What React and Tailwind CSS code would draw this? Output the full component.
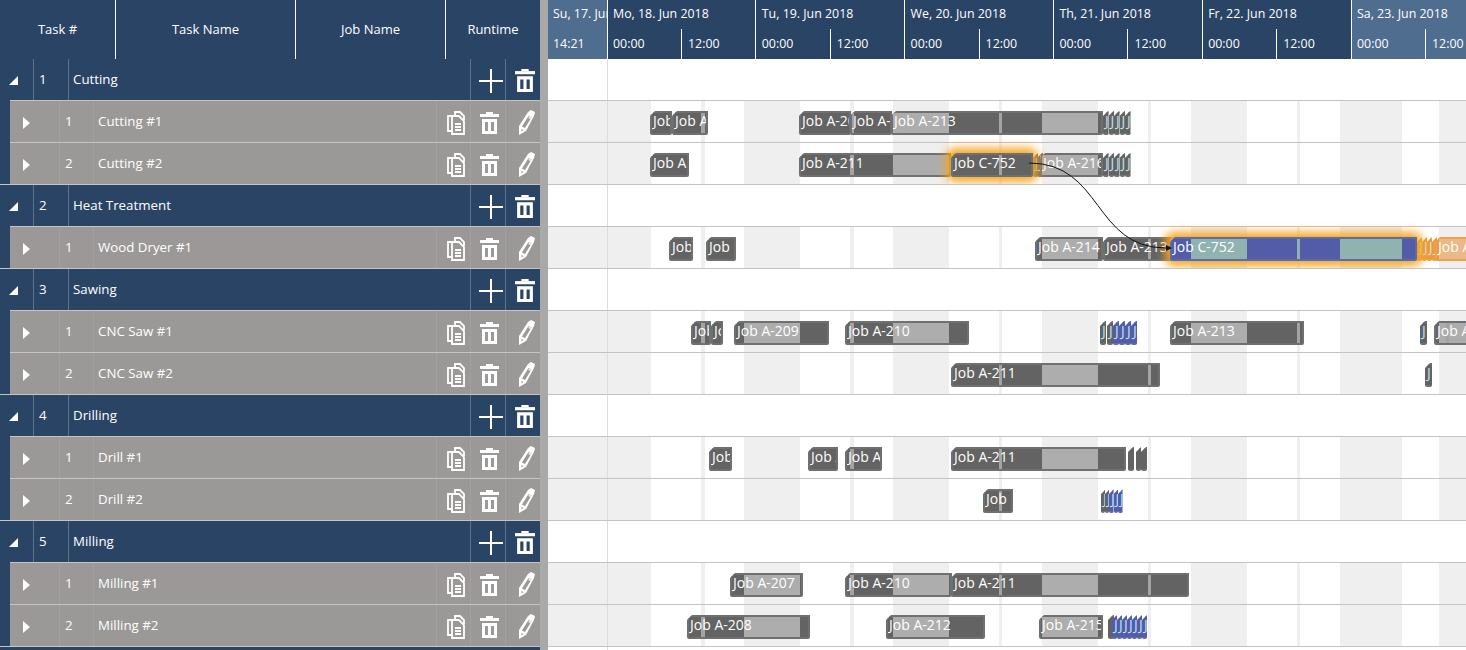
const bands = [[548, 651], [744, 800], [893, 949], [1042, 1098], [1191, 1247], [1340, 1402], [1439, 1500]]
const stripes = [[701, 705], [850, 854], [999, 1002], [1148, 1151], [1297, 1300], [1446, 1449]]
const ORIGIN = 548

const tones = {
  dark: { bg: 'bg-[#636363]', light: 'bg-[#adadad]', stripe: 'bg-[#a3a3a3]', edge: 'border-[#707070]' },
  blue: { bg: 'bg-[#525ca8]', light: 'bg-[#90b3b0]', stripe: 'bg-[#90b3b0]', edge: 'border-[#5d6ba8]' },
  orange: { bg: 'bg-[#ee9a3a]', light: 'bg-[#e9b987]', stripe: 'bg-[#e9b987]', edge: 'border-[#eea04a]' },
}

const small = (start, count, step, tone = 'dark', w = step) =>
  Array.from({ length: count }, (_, i) => ({ x: start + i * step, end: start + i * step + w, label: 'J', tone }))

const groups = [
  {
    id: 1,
    name: 'Cutting',
    items: [
      {
        name: 'Cutting #1',
        bars: [
          { x: 650, end: 672, label: 'Job A-206' },
          { x: 672, end: 708, label: 'Job A' },
          { x: 799, end: 851, label: 'Job A-207' },
          { x: 850, end: 892, label: 'Job A-208' },
          { x: 891, end: 1103, label: 'Job A-213' },
          ...small(1103, 5, 5.5),
        ],
      },
      {
        name: 'Cutting #2',
        bars: [
          { x: 650, end: 689, label: 'Job A' },
          { x: 799, end: 951, label: 'Job A-211' },
          { x: 1033, end: 1038, label: 'J' },
          { x: 1037, end: 1043, label: 'J' },
          { x: 1040, end: 1103, label: 'Job A-216' },
          ...small(1103, 5, 5.5),
          { x: 951, end: 1033, label: 'Job C-752', glow: true },
        ],
      },
    ],
  },
  {
    id: 2,
    name: 'Heat Treatment',
    items: [
      {
        name: 'Wood Dryer #1',
        bars: [
          { x: 669, end: 693, label: 'Job' },
          { x: 706, end: 736, label: 'Job' },
          { x: 1035, end: 1103, label: 'Job A-214' },
          { x: 1103, end: 1172, label: 'Job A-213' },
          ...small(1417, 4, 5, 'orange'),
          { x: 1435, end: 1480, label: 'Job A', tone: 'orange' },
          { x: 1170, end: 1417, label: 'Job C-752', tone: 'blue', glow: true },
        ],
      },
    ],
  },
  {
    id: 3,
    name: 'Sawing',
    items: [
      {
        name: 'CNC Saw #1',
        bars: [
          { x: 691, end: 711, label: 'Job A' },
          { x: 711, end: 723, label: 'Job' },
          { x: 734, end: 829, label: 'Job A-209' },
          { x: 845, end: 969, label: 'Job A-210' },
          { x: 1100, end: 1106, label: 'J' },
          { x: 1107, end: 1113, label: 'J' },
          ...small(1113, 4, 6, 'blue'),
          { x: 1170, end: 1304, label: 'Job A-213' },
          { x: 1420, end: 1427, label: 'J' },
          { x: 1434, end: 1480, label: 'Job A' },
        ],
      },
      {
        name: 'CNC Saw #2',
        bars: [
          { x: 951, end: 1160, label: 'Job A-211' },
          { x: 1425, end: 1432, label: 'J' },
        ],
      },
    ],
  },
  {
    id: 4,
    name: 'Drilling',
    items: [
      {
        name: 'Drill #1',
        bars: [
          { x: 709, end: 732, label: 'Job A' },
          { x: 808, end: 838, label: 'Job A' },
          { x: 845, end: 882, label: 'Job A-210' },
          { x: 951, end: 1126, label: 'Job A-211' },
          { x: 1128, end: 1134, label: '' },
          { x: 1136, end: 1141, label: '' },
          { x: 1141, end: 1147, label: '' },
        ],
      },
      {
        name: 'Drill #2',
        bars: [
          { x: 983, end: 1013, label: 'Job' },
          ...small(1101, 2, 4),
          ...small(1109, 3, 4.5, 'blue'),
        ],
      },
    ],
  },
  {
    id: 5,
    name: 'Milling',
    items: [
      {
        name: 'Milling #1',
        bars: [
          { x: 730, end: 803, label: 'Job A-207' },
          { x: 845, end: 952, label: 'Job A-210' },
          { x: 951, end: 1189, label: 'Job A-211' },
        ],
      },
      {
        name: 'Milling #2',
        bars: [
          { x: 687, end: 810, label: 'Job A-208' },
          { x: 886, end: 985, label: 'Job A-212' },
          { x: 1039, end: 1103, label: 'Job A-215' },
          { x: 1108, end: 1114, label: '' },
          ...small(1112, 7, 5, 'blue'),
        ],
      },
    ],
  },
]

const days = ['Mo, 18. Jun 2018', 'Tu, 19. Jun 2018', 'We, 20. Jun 2018', 'Th, 21. Jun 2018', 'Fr, 22. Jun 2018', 'Sa, 23. Jun 2018']

function PlusIcon() {
  return (
    <svg width="24" height="24" viewBox="0 0 24 24" fill="white">
      <rect x="0" y="11" width="24" height="2" />
      <rect x="11" y="0" width="2" height="24" />
    </svg>
  )
}

function TrashIcon({ size = 19 }) {
  return (
    <svg width={size} height={(size * 22) / 19} viewBox="0 0 19 22" fill="white">
      <rect x="6" y="0" width="7" height="2" />
      <rect x="0" y="2" width="19" height="3" />
      <path fillRule="evenodd" d="M2 7h15v15H2z M5 10v9h3v-9z M11 10v9h3v-9z" />
    </svg>
  )
}

function CopyIcon() {
  return (
    <svg width="18" height="24" viewBox="0 0 18 24" fill="none" stroke="white" strokeWidth="1.8">
      <path d="M5 5H1v15h4" />
      <path d="M8 5V1h5l4 4v4" />
      <path d="M5 5h7l5 5v13H5z" fill="#9b9997" />
      <path d="M8 13h6M8 16h6M8 19h6" />
    </svg>
  )
}

function PencilIcon() {
  return (
    <svg width="17" height="25" viewBox="0 0 17 25">
      <path fillRule="evenodd" fill="white" d="M10 2l3-2 4 2-1 4-8 15-7 4 0-9zM10.500 6L4 16.500l3 1.500L13.500 7.500z" />
      <path fill="white" d="M11 6.500l2.500 1.200-.8 1.500-2.500-1.300z" opacity="0.8" />
      <path fill="#9b9997" d="M3.500 19l2 1-2 1.500z" />
    </svg>
  )
}

function GroupRow({ group, first }) {
  return (
    <div className={`flex items-center bg-[#2a4466] text-white ${first ? 'h-[41px]' : 'h-[42px] border-t border-[#c5c5c2]'}`}>
      <div className="w-[33px] h-full pt-[1px] flex items-center justify-center">
        <svg width="9" height="9" viewBox="0 0 9 9" fill="white" className="ml-[-7px]">
          <path d="M9 0v9H0z" />
        </svg>
      </div>
      <div className="w-[35px] h-full border-l border-[#5c7390] pl-[5px] flex items-center">{group.id}</div>
      <div className="flex-1 h-full border-l border-[#5c7390] pl-[4px] flex items-center">{group.name}</div>
      <div className="w-[35px] h-full border-l border-[#5c7390] pl-[6px] pt-[3px] flex items-center justify-center">
        <PlusIcon />
      </div>
      <div className="w-[35px] h-full border-l border-[#5c7390] pl-[3px] pt-[2px] flex items-center justify-center">
        <TrashIcon size={20} />
      </div>
    </div>
  )
}

function ItemRow({ item, index }) {
  return (
    <div className="h-[42px] bg-[#2a4466]">
      <div className="h-full ml-[10px] flex items-center bg-[#9b9997] border-t border-[#c5c5c2] text-white">
        <div className="w-[49px] h-full pl-[13px] pt-[2px] flex items-center">
          <svg width="7" height="12" viewBox="0 0 7 12" fill="white">
            <path d="M0 0l7 6-7 6z" />
          </svg>
        </div>
        <div className="w-[34px] h-full border-l border-[#a3a19e] pl-[5px] flex items-center">{index}</div>
        <div className="flex-1 h-full border-l border-[#a3a19e] pl-[4px] flex items-center">{item.name}</div>
        <div className="w-[34px] h-full border-l border-[#a3a19e] pl-[4px] pt-[3px] flex items-center justify-center">
          <CopyIcon />
        </div>
        <div className="w-[35px] h-full border-l border-[#a3a19e] pl-[3px] pt-[2px] flex items-center justify-center">
          <TrashIcon />
        </div>
        <div className="w-[35px] h-full border-l border-[#a3a19e] pl-[6px] pt-[1px] flex items-center justify-center">
          <PencilIcon />
        </div>
      </div>
    </div>
  )
}

function Bar({ bar }) {
  const tone = tones[bar.tone || 'dark']
  const width = bar.end - bar.x
  const thin = width < 8
  const overlaps = (list) =>
    list
      .map(([a, b]) => [Math.max(a, bar.x), Math.min(b, bar.end)])
      .filter(([a, b]) => b > a)

  return (
    <>
      {bar.glow && (
        <div
          className="absolute top-[10px] h-[24px] rounded-sm bg-[#f5a623] shadow-[0_0_10px_5px_#f5a623]"
          style={{ left: bar.x - ORIGIN, width }}
        />
      )}
      <div
        className={`absolute top-[10px] h-[24px] overflow-hidden rounded-b-[2px] border-y-2 ${thin ? '' : 'border-x-2'} ${tone.edge} ${tone.bg} [clip-path:polygon(5px_0,100%_0,100%_100%,0_100%,0_5px)]`}
        style={{ left: bar.x - ORIGIN, width }}
      >
        {overlaps(bands).map(([a, b]) => (
          <div key={a} className={`absolute top-0 bottom-0 ${tone.light}`} style={{ left: a - bar.x - 2, width: b - a }} />
        ))}
        {overlaps(stripes).map(([a, b]) => (
          <div key={a} className={`absolute top-0 bottom-0 ${tone.stripe}`} style={{ left: a - bar.x - 2, width: b - a }} />
        ))}
        <div className={`relative ${thin ? 'pl-[2px] text-[#bfe3f5]' : 'pl-[1px] text-white'} text-[14px] leading-[16px] whitespace-nowrap`}>{bar.label}</div>
      </div>
    </>
  )
}

function TimelineRow({ first, bars }) {
  return (
    <div className={`relative bg-white ${first ? 'h-[41px]' : 'h-[42px] border-t border-[#c3c3c3]'}`}>
      {bars && bands.map(([a, b]) => (
        <div key={a} className="absolute top-0 bottom-0 bg-[#efefef]" style={{ left: a - ORIGIN, width: b - a }} />
      ))}
      {bars && stripes.map(([a, b]) => (
        <div key={a} className="absolute top-0 bottom-0 bg-[#efefef]" style={{ left: a - ORIGIN, width: b - a }} />
      ))}
      <div className="absolute top-0 bottom-0 left-[59px] w-px bg-[#dcdcdc]" />
      {bars && bars.map((bar, i) => <Bar key={i} bar={bar} />)}
    </div>
  )
}

export default function App() {
  return (
    <div className="w-[1466px] h-[650px] overflow-hidden flex bg-white text-[13.3px] font-['Open_Sans',sans-serif]">
      <div className="w-[540px] shrink-0">
        <div className="h-[59px] flex bg-[#2a4466] text-white text-[13px]">
          <div className="w-[115px] flex items-center justify-center">Task #</div>
          <div className="w-[180px] border-l border-white flex items-center justify-center">Task Name</div>
          <div className="w-[150px] border-l border-white flex items-center justify-center">Job Name</div>
          <div className="flex-1 border-l border-white flex items-center justify-center">Runtime</div>
        </div>
        {groups.map((group, g) => (
          <div key={group.id}>
            <GroupRow group={group} first={g === 0} />
            {group.items.map((item, i) => (
              <ItemRow key={item.name} item={item} index={i + 1} />
            ))}
          </div>
        ))}
        <div className="h-[42px] bg-[#2a4466] border-t border-[#c5c5c2]" />
      </div>

      <div className="w-[8px] shrink-0 bg-[#a9a9a9]" />

      <div className="relative flex-1 overflow-hidden">
        <div className="h-[59px] flex bg-[#2a4466] text-white text-[12.4px]">
          <div className="w-[58.6px] shrink-0 bg-[#4f6d8f] overflow-hidden whitespace-nowrap">
            <div className="h-[29px] pl-[5px] leading-[27px]">Su, 17. Jun 2018</div>
            <div className="h-[30px] pl-[5px] leading-[29px]">14:21</div>
          </div>
          {days.map((day, i) => (
            <div key={day} className={`w-[148.8px] shrink-0 border-l border-white ${i === 5 ? 'bg-[#4f6d8f]' : ''}`}>
              <div className="h-[29px] pl-[5.4px] leading-[27px] whitespace-nowrap">{day}</div>
              <div className="h-[30px] flex">
                <div className="w-[73.4px] pl-[5.4px] leading-[29px]">00:00</div>
                <div className="flex-1 border-l border-white pl-[6px] leading-[29px]">12:00</div>
              </div>
            </div>
          ))}
        </div>
        {groups.map((group, g) => (
          <div key={group.id}>
            <TimelineRow first={g === 0} />
            {group.items.map((item) => (
              <TimelineRow key={item.name} bars={item.bars} />
            ))}
          </div>
        ))}
        <TimelineRow />
        <svg className="absolute left-0 top-0 pointer-events-none" width="918" height="650" fill="none">
          <path d="M481 163 C 555 163, 545 248, 618 248" stroke="#111" strokeWidth="1" />
          <path d="M618 245 L624 248 L618 251 z" fill="#111" />
        </svg>
      </div>
    </div>
  )
}
